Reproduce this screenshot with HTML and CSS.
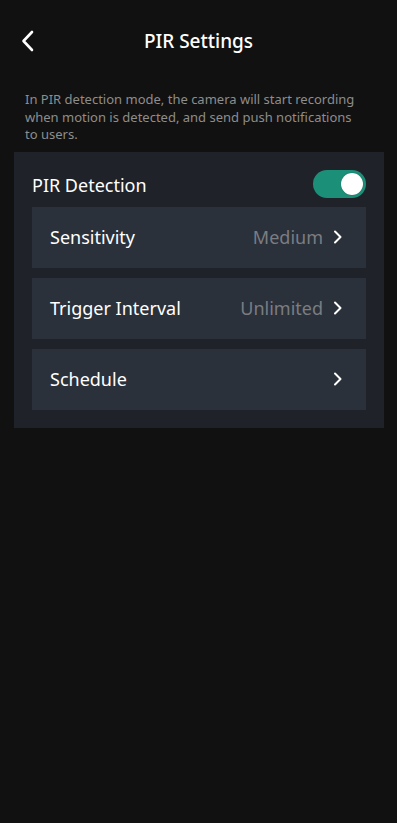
FILE: index.html
```
<!DOCTYPE html>
<html>
<head>
<meta charset="utf-8">
<link rel="stylesheet" href="styles.css">
</head>
<body>
<div class="screen">
  <header class="topbar">
    <button class="back" aria-label="Back">
      <svg width="13" height="22" viewBox="0 0 13 22"><path d="M11 2 L2.5 11 L11 20" fill="none" stroke="#fff" stroke-width="2.6" stroke-linecap="round" stroke-linejoin="round"/></svg>
    </button>
    <h1 class="title">PIR Settings</h1>
  </header>
  <p class="desc">In PIR detection mode, the camera will start recording when motion is detected, and send push notifications to users.</p>
  <section class="panel">
    <div class="panel-head">
      <span class="panel-label">PIR Detection</span>
      <span class="toggle"><span class="knob"></span></span>
    </div>
    <div class="row">
      <span class="row-label">Sensitivity</span>
      <span class="row-value">Medium</span>
      <svg class="chev" width="10" height="14" viewBox="0 0 10 14"><path d="M2 1.5 L7.5 7 L2 12.5" fill="none" stroke="#fff" stroke-width="2" stroke-linecap="round" stroke-linejoin="round"/></svg>
    </div>
    <div class="row">
      <span class="row-label">Trigger Interval</span>
      <span class="row-value">Unlimited</span>
      <svg class="chev" width="10" height="14" viewBox="0 0 10 14"><path d="M2 1.5 L7.5 7 L2 12.5" fill="none" stroke="#fff" stroke-width="2" stroke-linecap="round" stroke-linejoin="round"/></svg>
    </div>
    <div class="row">
      <span class="row-label">Schedule</span>
      <span class="row-value"></span>
      <svg class="chev" width="10" height="14" viewBox="0 0 10 14"><path d="M2 1.5 L7.5 7 L2 12.5" fill="none" stroke="#fff" stroke-width="2" stroke-linecap="round" stroke-linejoin="round"/></svg>
    </div>
  </section>
</div>
</body>
</html>
```
FILE: styles.css
```
* { box-sizing: border-box; }
html, body {
  margin: 0;
  padding: 0;
  background: #111111;
}
body {
  font-family: "Noto Sans", "Open Sans", sans-serif;
  color: #ffffff;
}
.screen {
  width: 397px;
  min-height: 823px;
  background: #111111;
}
.topbar {
  position: relative;
  height: 82px;
  display: flex;
  align-items: center;
  justify-content: center;
}
.back {
  position: absolute;
  left: 21px;
  top: 30px;
  background: none;
  border: 0;
  padding: 0;
  width: 13px;
  height: 22px;
  display: flex;
}
.title {
  margin: 0;
  font-size: 19px;
  font-weight: 500;
  line-height: 1;
}
.desc {
  margin: 9px 0 0;
  padding: 0 38px 0 25px;
  font-size: 13px;
  line-height: 17.5px;
  color: #8d8d8d;
}
.panel {
  margin: 8px 13px 0 14px;
  background: #1f2229;
  padding: 18px 18px 18px 18px;
  display: flex;
  flex-direction: column;
  gap: 10px;
}
.panel-head {
  display: flex;
  align-items: center;
  justify-content: space-between;
  height: 28px;
  margin-bottom: -1px;
}
.panel-label {
  font-size: 18px;
  position: relative;
  top: 1px;
}
.toggle {
  width: 53px;
  height: 28px;
  border-radius: 14px;
  background: #1c8f78;
  position: relative;
}
.knob {
  position: absolute;
  right: 3px;
  top: 3px;
  width: 22px;
  height: 22px;
  border-radius: 50%;
  background: #ffffff;
  box-shadow: 0 0 1px rgba(0,0,0,0.5);
}
.row {
  height: 61px;
  background: #2b313b;
  display: flex;
  align-items: center;
  padding: 0 23px 0 18px;
}
.row-label {
  font-size: 18px;
  flex: 1;
}
.row-value {
  font-size: 18px;
  color: #7a7d82;
  margin-right: 10px;
}
.chev { display: block; }
```
